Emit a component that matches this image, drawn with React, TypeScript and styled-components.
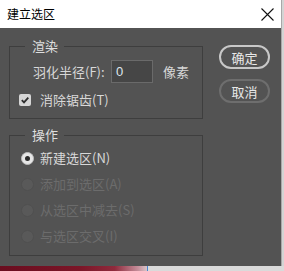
import React from "react";
import styled, { createGlobalStyle } from "styled-components";

const Global = createGlobalStyle`
  html, body { margin: 0; padding: 0; }
  body {
    width: 284px;
    height: 271px;
    overflow: hidden;
    background: #d4d4d4;
    font-family: "Noto Sans CJK SC", "Microsoft YaHei", sans-serif;
  }
`;

const Page = styled.div`
  display: flex;
  flex-direction: column;
  width: 284px;
  height: 271px;
`;

const Dialog = styled.div`
  width: 281px;
  height: 266px;
  display: flex;
  flex-direction: column;
  border-right: 1px solid #a8a8a8;
`;

const TitleBar = styled.div`
  height: 28px;
  flex: none;
  background: #ffffff;
  display: flex;
  align-items: center;
  justify-content: space-between;
  padding: 0 6px 0 7px;
`;

const Title = styled.span`
  font-size: 12px;
  color: #000;
  line-height: 14px;
  margin-top: -1px;
`;

const Close = styled.svg`
  width: 13px;
  height: 13px;
  margin-right: 1px;
`;

const Body = styled.div`
  flex: 1;
  background: #535353;
  display: flex;
  align-items: flex-start;
  padding: 10px 0 0 9px;
`;

const Groups = styled.div`
  width: 194px;
  display: flex;
  flex-direction: column;
  gap: 8px;
`;

const Group = styled.fieldset<{ $pb: number }>`
  margin: 0;
  padding: 0 0 ${(p) => p.$pb}px 0;
  border: 1px solid #3e3e3e;
  min-width: 0;
  display: flex;
  flex-direction: column;
`;

const Legend = styled.legend`
  margin-left: 15px;
  padding: 0 6px 0 7px;
  font-size: 13px;
  line-height: 16px;
  color: #dedede;
`;

const Row = styled.div<{ $h: number; $pl: number }>`
  height: ${(p) => p.$h}px;
  display: flex;
  align-items: center;
  padding-left: ${(p) => p.$pl}px;
`;

const Label = styled.span<{ $disabled?: boolean; $w?: number }>`
  font-size: 13px;
  line-height: 16px;
  color: ${(p) => (p.$disabled ? "#6c6c6c" : "#d8d8d8")};
  white-space: nowrap;
  ${(p) => (p.$w ? `width: ${p.$w}px;` : "")}
`;

const Input = styled.div`
  width: 42px;
  height: 23px;
  box-sizing: border-box;
  background: #464646;
  border: 1px solid #6a6a6a;
  color: #dfe6ee;
  font-size: 13px;
  font-family: "Liberation Sans", Arial, sans-serif;
  display: flex;
  align-items: center;
  padding-left: 4px;
  margin-right: 10px;
`;

const Check = styled.span`
  width: 12px;
  height: 12px;
  border-radius: 2px;
  background: #d6d6d6;
  display: flex;
  align-items: center;
  justify-content: center;
  margin-right: 9px;
`;

const Radio = styled.span<{ $on?: boolean }>`
  width: 13px;
  height: 13px;
  box-sizing: border-box;
  border-radius: 50%;
  background: ${(p) => (p.$on ? "#e6e6e6" : "#595959")};
  border: 1px solid ${(p) => (p.$on ? "#bdbdbd" : "#505050")};
  display: flex;
  align-items: center;
  justify-content: center;
  margin-right: 6px;
  &::after {
    content: "";
    display: ${(p) => (p.$on ? "block" : "none")};
    width: 5px;
    height: 5px;
    border-radius: 50%;
    background: #2a2a2a;
  }
`;

const Buttons = styled.div`
  margin: 7px 0 0 16px;
  display: flex;
  flex-direction: column;
  gap: 10px;
`;

const Button = styled.div<{ $primary?: boolean }>`
  width: 51px;
  height: 24px;
  box-sizing: border-box;
  border-radius: 12px;
  border: 2px solid ${(p) => (p.$primary ? "#c8c8c8" : "#6e6e6e")};
  color: #e8e8e8;
  font-size: 13px;
  display: flex;
  align-items: center;
  justify-content: center;
`;

const Strip = styled.div`
  flex: 1;
  display: flex;
`;

const Wine = styled.div`
  width: 147px;
  background: linear-gradient(
    to right,
    #6a0d1f 0%,
    #7c1628 55%,
    #8f2a3c 78%,
    #c58f9b 94%,
    #d8c4c8 100%
  );
  border-right: 1px solid #4a86d0;
`;

const Light = styled.div`
  flex: 1;
  background: #dadada;
`;

const radios = [
  { t: "新建选区(N)", on: true },
  { t: "添加到选区(A)" },
  { t: "从选区中减去(S)" },
  { t: "与选区交叉(I)" },
];

export default function App() {
  return (
    <Page>
      <Global />
      <Dialog>
        <TitleBar>
          <Title>建立选区</Title>
          <Close viewBox="0 0 13 13">
            <path d="M0.5 0.5 L12.5 12.5 M12.5 0.5 L0.5 12.5" stroke="#111" strokeWidth="1.1" fill="none" />
          </Close>
        </TitleBar>
        <Body>
          <Groups>
            <Group $pb={10}>
              <Legend>渲染</Legend>
              <Row $h={23} $pl={23} style={{ marginTop: 6 }}>
                <Label $w={78}>羽化半径(F):</Label>
                <Input>0</Input>
                <Label>像素</Label>
              </Row>
              <Row $h={16} $pl={9} style={{ marginTop: 9 }}>
                <Check>
                  <svg width="10" height="10" viewBox="0 0 10 10">
                    <path d="M1.8 5.2 L4 7.4 L8.3 2.6" stroke="#2e2e2e" strokeWidth="1.8" fill="none" />
                  </svg>
                </Check>
                <Label>消除锯齿(T)</Label>
              </Row>
            </Group>
            <Group $pb={6}>
              <Legend>操作</Legend>
              <div style={{ height: 2 }} />
              {radios.map((r) => (
                <Row key={r.t} $h={26} $pl={11}>
                  <Radio $on={r.on} />
                  <Label $disabled={!r.on}>{r.t}</Label>
                </Row>
              ))}
            </Group>
          </Groups>
          <Buttons>
            <Button $primary>确定</Button>
            <Button>取消</Button>
          </Buttons>
        </Body>
      </Dialog>
      <Strip>
        <Wine />
        <Light />
      </Strip>
    </Page>
  );
}
